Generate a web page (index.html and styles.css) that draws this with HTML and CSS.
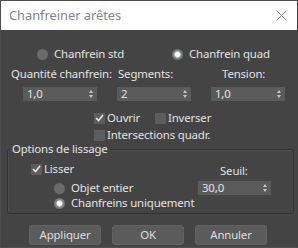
FILE: index.html
```html
<!DOCTYPE html>
<html>
<head>
<meta charset="utf-8">
<link rel="stylesheet" href="styles.css">
</head>
<body>
<div class="window">
  <div class="titlebar">
    <span class="title">Chanfreiner arêtes</span>
    <svg class="close" width="11" height="11" viewBox="0 0 11 11"><path d="M0.5 0.5 L10.5 10.5 M10.5 0.5 L0.5 10.5" stroke="#8c8c8c" stroke-width="1"/></svg>
  </div>
  <div class="content">
    <div class="radio-row">
      <label class="radio r-std"><span class="dot"></span>Chanfrein std</label>
      <label class="radio on"><span class="dot"></span>Chanfrein quad</label>
    </div>
    <div class="labels">
      <span>Quantité chanfrein:</span>
      <span>Segments:</span>
      <span>Tension:</span>
    </div>
    <div class="spinners">
      <div class="spinner"><span>1,0</span><span class="arrows"><i class="up"></i><i class="down"></i></span></div>
      <div class="spinner"><span>2</span><span class="arrows"><i class="up"></i><i class="down"></i></span></div>
      <div class="spinner"><span>1,0</span><span class="arrows"><i class="up"></i><i class="down"></i></span></div>
    </div>
    <div class="check-row">
      <label class="check c-ouvrir"><span class="box checked"><svg width="9" height="8" viewBox="0 0 9 8"><path d="M1 4 L3.5 6.5 L8 1" fill="none" stroke="#e8e8e8" stroke-width="1.6"/></svg></span>Ouvrir</label>
      <label class="check"><span class="box"></span>Inverser</label>
    </div>
    <div class="check-row second">
      <label class="check"><span class="box"></span>Intersections quadr.</label>
    </div>
    <fieldset class="group">
      <legend>Options de lissage</legend>
      <div class="g-top">
        <label class="check lisser"><span class="box checked"><svg width="9" height="8" viewBox="0 0 9 8"><path d="M1 4 L3.5 6.5 L8 1" fill="none" stroke="#e8e8e8" stroke-width="1.6"/></svg></span>Lisser</label>
        <span class="seuil">Seuil:</span>
      </div>
      <div class="g-mid">
        <label class="radio r-obj"><span class="dot"></span>Objet entier</label>
        <div class="spinner"><span>30,0</span><span class="arrows"><i class="up"></i><i class="down"></i></span></div>
      </div>
      <div class="g-bot">
        <label class="radio on"><span class="dot"></span>Chanfreins uniquement</label>
      </div>
    </fieldset>
    <div class="buttons">
      <button class="btn">Appliquer</button>
      <button class="btn">OK</button>
      <button class="btn">Annuler</button>
    </div>
  </div>
</div>
</body>
</html>
```

FILE: styles.css
```css
* { box-sizing: border-box; }
html, body {
  margin: 0;
  padding: 0;
  width: 298px;
  height: 248px;
  overflow: hidden;
  background: #444444;
}
body {
  font-family: "Noto Sans", "Open Sans", sans-serif;
  font-size: 11.4px;
  letter-spacing: -0.15px;
  color: #e2e2e2;
  white-space: nowrap;
}
.window {
  width: 298px;
  height: 248px;
  border: 1px solid #4e4e4e;
  border-right-color: #444;
}
.titlebar {
  height: 29px;
  background: #ffffff;
  display: flex;
  align-items: center;
  justify-content: space-between;
  padding: 0 10px 0 8px;
}
.title {
  font-size: 12.8px;
  letter-spacing: 0;
  color: #838391;
  margin-top: -1px;
}
.close { display: block; }

.content { display: flex; flex-direction: column; }

.radio, .check {
  display: flex;
  align-items: center;
  line-height: 14px;
}
.dot {
  width: 11px;
  height: 11px;
  border-radius: 50%;
  background: #6b6b6b;
  margin-right: 6px;
  flex: none;
}
.radio.on .dot {
  background: radial-gradient(circle, #f4f4f4 0 2.5px, #8a8a8a 3.5px, #6e6e6e 5.5px);
}
.radio-row {
  display: flex;
  padding-left: 36px;
  margin-top: 17px;
  height: 14px;
}
.r-std { width: 135px; }

.labels {
  display: grid;
  grid-template-columns: 107px 104px auto;
  padding-left: 10px;
  margin-top: 6px;
  line-height: 14px;
}
.spinners {
  display: flex;
  gap: 20px;
  padding-left: 22px;
  margin-top: 6px;
}
.spinner {
  width: 74px;
  height: 14px;
  background: #5b5b5b;
  display: flex;
  align-items: center;
  justify-content: space-between;
  padding: 0 4px 0 4px;
  line-height: 14px;
}
.arrows {
  display: flex;
  flex-direction: column;
  gap: 2px;
}
.arrows i {
  display: block;
  width: 0;
  height: 0;
  border-left: 2.5px solid transparent;
  border-right: 2.5px solid transparent;
}
.arrows .up { border-bottom: 3px solid #c8c8c8; }
.arrows .down { border-top: 3px solid #c8c8c8; }

.check-row {
  display: flex;
  padding-left: 93px;
  margin-top: 10px;
  height: 14px;
}
.check-row.second { margin-top: 3px; }
.c-ouvrir { width: 61px; }
.box {
  width: 11px;
  height: 11px;
  background: #5d5d5d;
  margin-right: 2px;
  display: flex;
  align-items: center;
  justify-content: center;
  flex: none;
}

.group {
  margin: 0 3px 0 6px;
  padding: 0;
  border: 1px solid #333333;
  border-radius: 3px;
  height: 72px;
  min-width: 0;
  box-shadow: inset 1px 1px 0 #4e4e4e;
}
.group legend {
  padding: 0 2px;
  margin-left: 2px;
  line-height: 14px;
}
.g-top {
  display: flex;
  align-items: center;
  padding-left: 23px;
  margin-top: 6px;
  height: 14px;
}
.lisser { width: 189px; }
.seuil { padding-top: 2px; }
.g-mid {
  display: flex;
  align-items: center;
  padding-left: 46px;
  margin-top: 5px;
  height: 14px;
}
.r-obj { width: 144px; }
.g-mid .spinner { width: 73px; }
.g-bot {
  padding-left: 46px;
  margin-top: 1px;
  height: 14px;
  display: flex;
}

.buttons {
  display: flex;
  gap: 11px;
  padding-left: 28px;
  margin-top: 11px;
}
.btn {
  width: 72px;
  height: 20px;
  background: #5b5b5b;
  border: 1px solid #626262;
  border-radius: 3px;
  color: #dedede;
  font-family: "Noto Sans", "Open Sans", sans-serif;
  font-size: 11.4px;
  letter-spacing: -0.15px;
  padding: 0;
  line-height: 16px;
}
```
